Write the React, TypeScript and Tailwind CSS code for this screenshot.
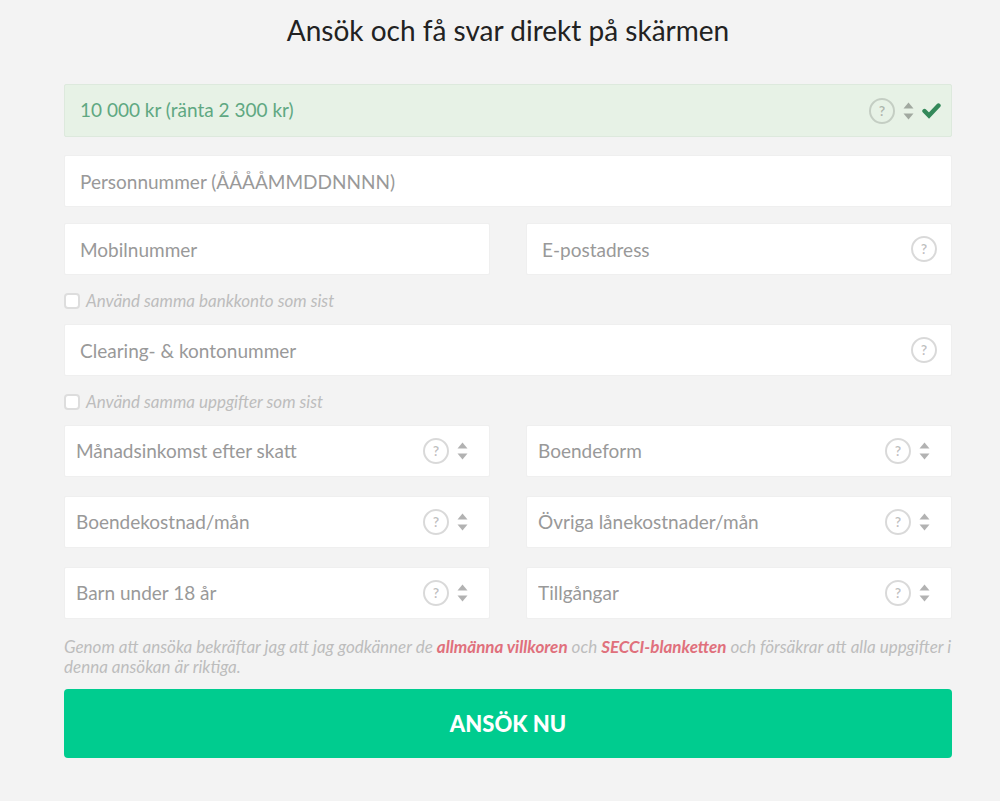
import { useState } from "react";
import type { ReactNode } from "react";

/**
 * Loan application form: amount, contact details, bank account
 * and household economy, followed by the terms and submit button.
 */

type SelectItem = {
  id: string;
  label: string;
  options: string[];
};

const ECONOMY: SelectItem[] = [
  { id: "income", label: "Månadsinkomst efter skatt", options: ["15 000 kr", "25 000 kr", "35 000 kr"] },
  { id: "housing", label: "Boendeform", options: ["Hyresrätt", "Bostadsrätt", "Villa"] },
  { id: "rent", label: "Boendekostnad/mån", options: ["3 000 kr", "6 000 kr", "9 000 kr"] },
  { id: "loans", label: "Övriga lånekostnader/mån", options: ["0 kr", "1 000 kr", "3 000 kr"] },
  { id: "children", label: "Barn under 18 år", options: ["0", "1", "2", "3"] },
  { id: "assets", label: "Tillgångar", options: ["Inga", "Bil", "Bostad"] },
];

function HelpButton({ topic }: { topic: string }) {
  return (
    <button
      type="button"
      aria-label={`Hjälp: ${topic}`}
      className="flex size-[26px] shrink-0 items-center justify-center rounded-full border-2 border-black/15 text-sm leading-none font-bold text-black/25"
    >
      ?
    </button>
  );
}

function Arrows() {
  return (
    <svg aria-hidden viewBox="0 0 11 18" className="pointer-events-none h-[18px] w-[11px] shrink-0 fill-black/30">
      <path d="M5.5 0.5 10.5 6.5H0.5z" />
      <path d="M5.5 17.5 0.5 11.5h10z" />
    </svg>
  );
}

function CheckMark() {
  return (
    <svg aria-hidden viewBox="0 0 19 16" className="h-4 w-[19px] shrink-0">
      <path d="M2.5 8 7 12.5 16.5 2.5" fill="none" stroke="#34895a" strokeWidth="4.4" strokeLinecap="round" />
    </svg>
  );
}

function TextField({ id, label, type = "text", help }: { id: string; label: string; type?: string; help?: boolean }) {
  return (
    <div className="flex h-[52px] items-center rounded-xs border border-[#efefef] bg-white pr-[14px]">
      <input
        id={id}
        type={type}
        aria-label={label}
        placeholder={label}
        className="h-full min-w-0 flex-1 bg-transparent pl-[15px] text-[#8a8a8a] outline-none placeholder:text-[#999999]"
      />
      {help && <HelpButton topic={label} />}
    </div>
  );
}

function SelectField({ item }: { item: SelectItem }) {
  return (
    <div className="flex h-[52px] items-center gap-2 rounded-xs border border-[#efefef] bg-white pr-[21px]">
      <select
        id={item.id}
        aria-label={item.label}
        defaultValue=""
        className="h-full min-w-0 flex-1 appearance-none bg-transparent pl-[11px] text-[#999999] outline-none"
      >
        <option value="">{item.label}</option>
        {item.options.map((o) => (
          <option key={o}>{o}</option>
        ))}
      </select>
      <HelpButton topic={item.label} />
      <Arrows />
    </div>
  );
}

function CheckRow({ children }: { children: ReactNode }) {
  const [checked, setChecked] = useState(false);

  return (
    <label className="mt-[17px] mb-[14px] flex h-[18px] items-center gap-[6px] text-[17px] text-[#bdbdbd] italic">
      <input
        type="checkbox"
        checked={checked}
        onChange={(e) => setChecked(e.target.checked)}
        className="size-4 appearance-none rounded-sm border-2 border-[#dddddd] bg-white checked:bg-[#00cc8f]"
      />
      {children}
    </label>
  );
}

export default function App() {
  return (
    <main className="min-h-screen bg-[#f3f3f3] pt-[10px] pr-12 pb-10 pl-16 font-['Lato',sans-serif] text-[19px]">
      <h1 className="mb-[34px] text-center text-[28px] leading-10 text-[#222222]">
        Ansök och få svar direkt på skärmen
      </h1>

      <form onSubmit={(e) => e.preventDefault()}>
        <div className="mb-[18px] flex h-[53px] items-center gap-2 rounded-xs border border-[#dde9dd] bg-[#e7f2e6] pr-[10px]">
          <select
            id="amount"
            aria-label="Lånebelopp"
            className="h-full min-w-0 flex-1 appearance-none bg-transparent pl-[15px] text-[#5fa882] outline-none"
          >
            <option>10 000 kr (ränta 2 300 kr)</option>
            <option>15 000 kr (ränta 3 450 kr)</option>
          </select>
          <HelpButton topic="Lånebelopp" />
          <Arrows />
          <CheckMark />
        </div>

        <TextField id="ssn" label="Personnummer (ÅÅÅÅMMDDNNNN)" />

        <div className="mt-4 grid grid-cols-2 gap-9">
          <TextField id="mobile" label="Mobilnummer" type="tel" />
          <TextField id="email" label="E-postadress" type="email" help />
        </div>

        <CheckRow>Använd samma bankkonto som sist</CheckRow>
        <TextField id="account" label="Clearing- & kontonummer" help />
        <CheckRow>Använd samma uppgifter som sist</CheckRow>

        <div className="grid grid-cols-2 gap-x-9 gap-y-[19px]">
          {ECONOMY.map((item) => (
            <SelectField key={item.id} item={item} />
          ))}
        </div>

        <p className="mt-[18px] mb-3 text-[17px] leading-5 text-[#bdbdbd] italic">
          Genom att ansöka bekräftar jag att jag godkänner de{" "}
          <a href="#villkor" className="font-bold text-[#e0707c]">allmänna villkoren</a> och{" "}
          <a href="#secci" className="font-bold text-[#e0707c]">SECCI-blanketten</a> och försäkrar att alla
          uppgifter i denna ansökan är riktiga.
        </p>

        <button
          type="submit"
          className="h-[69px] w-full rounded-sm bg-[#00cc8f] text-[22px] font-black text-white"
        >
          ANSÖK NU
        </button>
      </form>
    </main>
  );
}
